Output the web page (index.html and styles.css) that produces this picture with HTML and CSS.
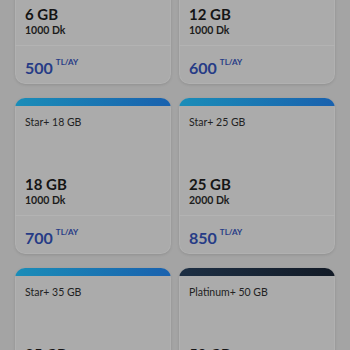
FILE: index.html
```html
<!DOCTYPE html>
<html>
<head>
<meta charset="utf-8">
<link rel="stylesheet" href="styles.css">
</head>
<body>
<div class="grid">
  <div class="card">
    <div class="bar"></div>
    <div class="title">Star+ 6 GB</div>
    <div class="info"><div class="gb">6 GB</div><div class="dk">1000 Dk</div></div>
    <div class="price"><span class="amt">500</span><span class="unit">TL/AY</span></div>
  </div>
  <div class="card">
    <div class="bar"></div>
    <div class="title">Star+ 12 GB</div>
    <div class="info"><div class="gb">12 GB</div><div class="dk">1000 Dk</div></div>
    <div class="price"><span class="amt">600</span><span class="unit">TL/AY</span></div>
  </div>
  <div class="card">
    <div class="bar"></div>
    <div class="title">Star+ 18 GB</div>
    <div class="info"><div class="gb">18 GB</div><div class="dk">1000 Dk</div></div>
    <div class="price"><span class="amt">700</span><span class="unit">TL/AY</span></div>
  </div>
  <div class="card">
    <div class="bar"></div>
    <div class="title">Star+ 25 GB</div>
    <div class="info"><div class="gb">25 GB</div><div class="dk">2000 Dk</div></div>
    <div class="price"><span class="amt">850</span><span class="unit">TL/AY</span></div>
  </div>
  <div class="card">
    <div class="bar"></div>
    <div class="title">Star+ 35 GB</div>
    <div class="info"><div class="gb">35 GB</div><div class="dk">2000 Dk</div></div>
    <div class="price"><span class="amt">1000</span><span class="unit">TL/AY</span></div>
  </div>
  <div class="card">
    <div class="bar dark"></div>
    <div class="title">Platinum+ 50 GB</div>
    <div class="info"><div class="gb">50 GB</div><div class="dk">3000 Dk</div></div>
    <div class="price"><span class="amt">1200</span><span class="unit">TL/AY</span></div>
  </div>
</div>
</body>
</html>
```
FILE: styles.css
```css
html, body {
  margin: 0;
  padding: 0;
  background: #a4a4a4;
  overflow: hidden;
  height: 350px;
}
body {
  font-family: "Lato", "Noto Sans", sans-serif;
  color: #151515;
}
.grid {
  display: grid;
  grid-template-columns: 1fr 1fr;
  gap: 14px 8px;
  padding: 0 15px;
  margin-top: -72px;
}
.card {
  height: 156px;
  background: #ababab;
  border-radius: 10px;
  overflow: hidden;
  display: flex;
  flex-direction: column;
  box-shadow: 0 1px 3px rgba(0,0,0,0.12), inset 0 0 0 1px rgba(255,255,255,0.08);
}
.bar {
  height: 8px;
  flex: none;
  background: linear-gradient(90deg, #1a8db8, #1961ae);
}
.bar.dark {
  background: linear-gradient(90deg, #1d2f44, #121a26);
}
.title {
  padding: 10px 10px 0;
  font-size: 10.5px;
  line-height: 12px;
  color: #222;
  flex: 1;
}
.info {
  padding: 0 10px 8px;
}
.gb {
  font-size: 15px;
  font-weight: 700;
  line-height: 19px;
}
.dk {
  font-size: 10.5px;
  font-weight: 700;
  line-height: 13px;
  color: #1c1c1c;
}
.price {
  border-top: 1px solid #b3b3b3;
  height: 39px;
  box-sizing: border-box;
  padding: 13px 10px 0;
  display: flex;
  align-items: flex-start;
}
.amt {
  font-size: 16px;
  font-weight: 700;
  line-height: 17px;
  color: #263b86;
}
.unit {
  font-size: 8px;
  font-weight: 700;
  line-height: 10px;
  color: #263b86;
  margin-left: 3px;
  margin-top: -2px;
}
```
